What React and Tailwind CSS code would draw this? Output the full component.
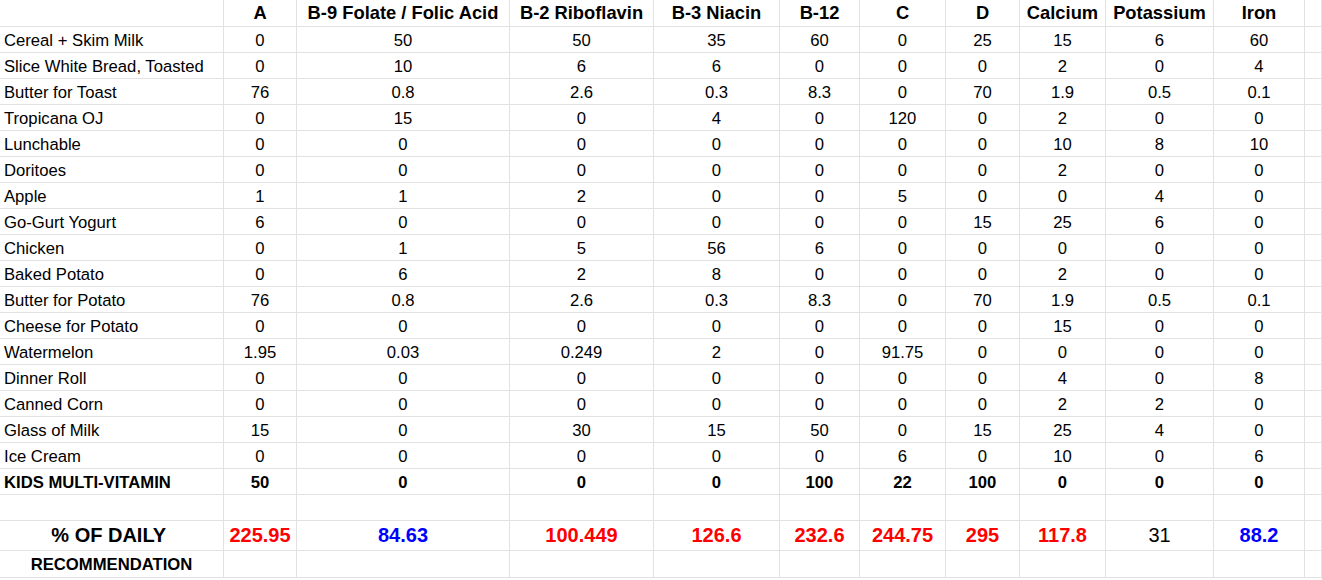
const headers = [
  "",
  "A",
  "B-9 Folate / Folic Acid",
  "B-2 Riboflavin",
  "B-3 Niacin",
  "B-12",
  "C",
  "D",
  "Calcium",
  "Potassium",
  "Iron",
];

const foods = [
  ["Cereal + Skim Milk", 0, 50, 50, 35, 60, 0, 25, 15, 6, 60],
  ["Slice White Bread, Toasted", 0, 10, 6, 6, 0, 0, 0, 2, 0, 4],
  ["Butter for Toast", 76, 0.8, 2.6, 0.3, 8.3, 0, 70, 1.9, 0.5, 0.1],
  ["Tropicana OJ", 0, 15, 0, 4, 0, 120, 0, 2, 0, 0],
  ["Lunchable", 0, 0, 0, 0, 0, 0, 0, 10, 8, 10],
  ["Doritoes", 0, 0, 0, 0, 0, 0, 0, 2, 0, 0],
  ["Apple", 1, 1, 2, 0, 0, 5, 0, 0, 4, 0],
  ["Go-Gurt Yogurt", 6, 0, 0, 0, 0, 0, 15, 25, 6, 0],
  ["Chicken", 0, 1, 5, 56, 6, 0, 0, 0, 0, 0],
  ["Baked Potato", 0, 6, 2, 8, 0, 0, 0, 2, 0, 0],
  ["Butter for Potato", 76, 0.8, 2.6, 0.3, 8.3, 0, 70, 1.9, 0.5, 0.1],
  ["Cheese for Potato", 0, 0, 0, 0, 0, 0, 0, 15, 0, 0],
  ["Watermelon", 1.95, 0.03, 0.249, 2, 0, 91.75, 0, 0, 0, 0],
  ["Dinner Roll", 0, 0, 0, 0, 0, 0, 0, 4, 0, 8],
  ["Canned Corn", 0, 0, 0, 0, 0, 0, 0, 2, 2, 0],
  ["Glass of Milk", 15, 0, 30, 15, 50, 0, 15, 25, 4, 0],
  ["Ice Cream", 0, 0, 0, 0, 0, 6, 0, 10, 0, 6],
];

const vitamin = ["KIDS MULTI-VITAMIN", 50, 0, 0, 0, 100, 22, 100, 0, 0, 0];

// color per total: red = over, blue = under, plain = normal
const totals = [
  ["225.95", "red"],
  ["84.63", "blue"],
  ["100.449", "red"],
  ["126.6", "red"],
  ["232.6", "red"],
  ["244.75", "red"],
  ["295", "red"],
  ["117.8", "red"],
  ["31", "plain"],
  ["88.2", "blue"],
];

const cell = "border-r border-b border-[#e2e2e2] flex items-end overflow-hidden whitespace-nowrap";

const App = () => {
  return (
    <div
      className="w-[1322px] h-[580px] bg-white text-black overflow-hidden"
      style={{ fontFamily: '"Liberation Sans", Arial, sans-serif' }}
    >
      <div className="grid grid-cols-[224px_73px_213px_144px_126px_80px_86px_74px_86px_108px_91px_1fr]">
        {/* header */}
        {headers.map((h, i) => (
          <div key={"h" + i} className={`${cell} h-[27px] justify-center font-bold text-[18.33px]`}>
            {h}
          </div>
        ))}
        <div className={`${cell} h-[27px]`}></div>

        {/* foods */}
        {foods.map((row) =>
          [
            <div key={row[0]} className={`${cell} h-[26px] pl-[4px] pb-[3px] leading-[17px] text-[16.67px]`}>
              {row[0]}
            </div>,
            ...row.slice(1).map((v, j) => (
              <div key={row[0] + j} className={`${cell} h-[26px] justify-center pb-[3px] leading-[17px] text-[16.67px]`}>
                {v}
              </div>
            )),
            <div key={row[0] + "end"} className={`${cell} h-[26px]`}></div>,
          ]
        )}

        {/* multi vitamin */}
        <div className={`${cell} h-[26px] pl-[4px] pb-[3px] leading-[17px] text-[16.67px] font-bold`}>{vitamin[0]}</div>
        {vitamin.slice(1).map((v, j) => (
          <div key={"v" + j} className={`${cell} h-[26px] justify-center pb-[3px] leading-[17px] text-[16.67px] font-bold`}>
            {v}
          </div>
        ))}
        <div className={`${cell} h-[26px]`}></div>

        {/* empty row */}
        {Array.from({ length: 12 }).map((_, i) => (
          <div key={"e" + i} className={`${cell} h-[26px]`}></div>
        ))}

        {/* totals */}
        <div className={`${cell} h-[30px] justify-center text-[20px] font-bold`}>% OF DAILY{"\u00a0"}</div>
        {totals.map(([t, c], j) => (
          <div
            key={"t" + j}
            className={`${cell} h-[30px] justify-center text-[20px] ${
              c === "red" ? "text-[#ff0000] font-bold" : c === "blue" ? "text-[#0000ff] font-bold" : "text-black"
            }`}
          >
            {t}
          </div>
        ))}
        <div className={`${cell} h-[30px]`}></div>

        {/* recommendation */}
        <div className={`${cell} h-[27px] justify-center text-[16.67px] font-bold`}>RECOMMENDATION</div>
        {Array.from({ length: 11 }).map((_, i) => (
          <div key={"r" + i} className={`${cell} h-[27px]`}></div>
        ))}
      </div>
    </div>
  );
};

export default App;
